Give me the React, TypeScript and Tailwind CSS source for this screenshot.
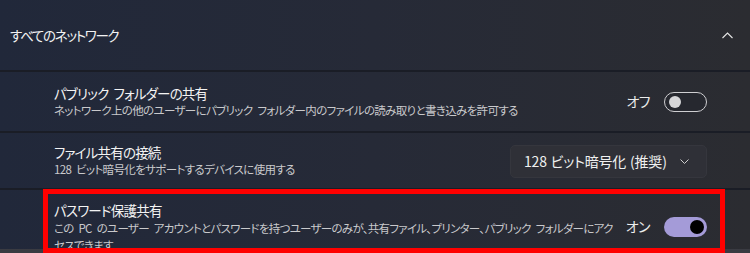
import React from 'react';

function ToggleOff() {
  return (
    <div className="w-[43px] h-[20px] rounded-full border border-[#cfcfd2] flex items-center px-[4px] bg-[#26282f]">
      <div className="w-[12px] h-[12px] rounded-full bg-[#d6d6d8]" />
    </div>
  );
}

function ToggleOn() {
  return (
    <div className="w-[43px] h-[20px] rounded-full bg-[#a49bd8] flex items-center justify-end px-[3px]">
      <div className="w-[14px] h-[14px] rounded-full bg-black" />
    </div>
  );
}

function Separator() {
  return <div className="h-[2px] bg-[#1a1d26]" />;
}

export default function App() {
  return (
    <div
      className="relative w-[750px] h-[253px] overflow-hidden bg-gradient-to-r from-[#21283a] via-[#262a37] to-[#2b2c31] text-[#f3f3f3] [font-feature-settings:'palt'] [word-spacing:3px]"
      style={{ fontFamily: '"Noto Sans CJK JP", "Noto Sans", sans-serif' }}
    >
      {/* Header */}
      <div className="h-[70px] flex items-center justify-between pl-[10px] pr-[17px]">
        <span className="text-[13.5px] leading-[20px] tracking-[-1.3px]">すべてのネットワーク</span>
        <svg width="11" height="7" viewBox="0 0 11 7" fill="none">
          <polyline points="0.5,6 5.5,1 10.5,6" stroke="#e6e6e6" strokeWidth="1.1" />
        </svg>
      </div>
      <Separator />

      {/* Public folder sharing */}
      <div className="h-[59px] flex items-center justify-between pl-[54px] pr-[43px]">
        <div className="flex flex-col">
          <span className="text-[13.5px] leading-[17px] tracking-[-0.8px]">パブリック フォルダーの共有</span>
          <span className="text-[11.5px] leading-[16px] tracking-[-0.65px] text-[#c9c9cc]">
            ネットワーク上の他のユーザーにパブリック フォルダー内のファイルの読み取りと書き込みを許可する
          </span>
        </div>
        <div className="flex items-center gap-[14px]">
          <span className="text-[14px] tracking-[-0.5px] text-[#ececec]">オフ</span>
          <ToggleOff />
        </div>
      </div>
      <Separator />

      {/* File sharing connections */}
      <div className="h-[55px] flex items-center justify-between pl-[54px] pr-[43px]">
        <div className="flex flex-col">
          <span className="text-[13.5px] leading-[17px] tracking-[-0.8px]">ファイル共有の接続</span>
          <span className="text-[11.5px] leading-[16px] tracking-[-0.65px] text-[#c9c9cc]">
            128 ビット暗号化をサポートするデバイスに使用する
          </span>
        </div>
        <div className="w-[197px] h-[33px] mt-[1px] rounded-[5px] bg-[#2f3037] border border-[#35363d] flex items-center justify-between pl-[13px] pr-[17px]">
          <span className="text-[14px] tracking-[-0.2px] [word-spacing:1px] whitespace-nowrap text-[#f0f0f0]">128 ビット暗号化 (推奨)</span>
          <svg className="shrink-0" width="9" height="5" viewBox="0 0 9 5" fill="none">
            <polyline points="0.5,0.5 4.5,4.5 8.5,0.5" stroke="#cfcfcf" strokeWidth="1" />
          </svg>
        </div>
      </div>
      <Separator />

      {/* Password protected sharing */}
      <div className="h-[59px] flex items-start justify-between pl-[54px] pr-[43px] pt-[10px]">
        <div className="flex flex-col">
          <span className="text-[13.5px] leading-[20px] tracking-[-0.8px]">パスワード保護共有</span>
          <span className="text-[11.5px] leading-[17px] tracking-[-0.7px] text-[#c9c9cc] whitespace-nowrap">
            この PC のユーザー アカウントとパスワードを持つユーザーのみが、共有ファイル、プリンター、パブリック フォルダーにアク
            <br />
            セスできます
          </span>
        </div>
        <div className="flex items-center gap-[14px] mt-[16px]">
          <span className="text-[14px] tracking-[-0.5px] text-[#ececec]">オン</span>
          <ToggleOn />
        </div>
      </div>
      <div className="h-[4px] bg-[#3a3b42]" />

      {/* Highlight annotation */}
      <div className="absolute left-[43px] top-[189px] w-[682px] h-[64px] border-[5px] border-[#ff0000] pointer-events-none" />
    </div>
  );
}
